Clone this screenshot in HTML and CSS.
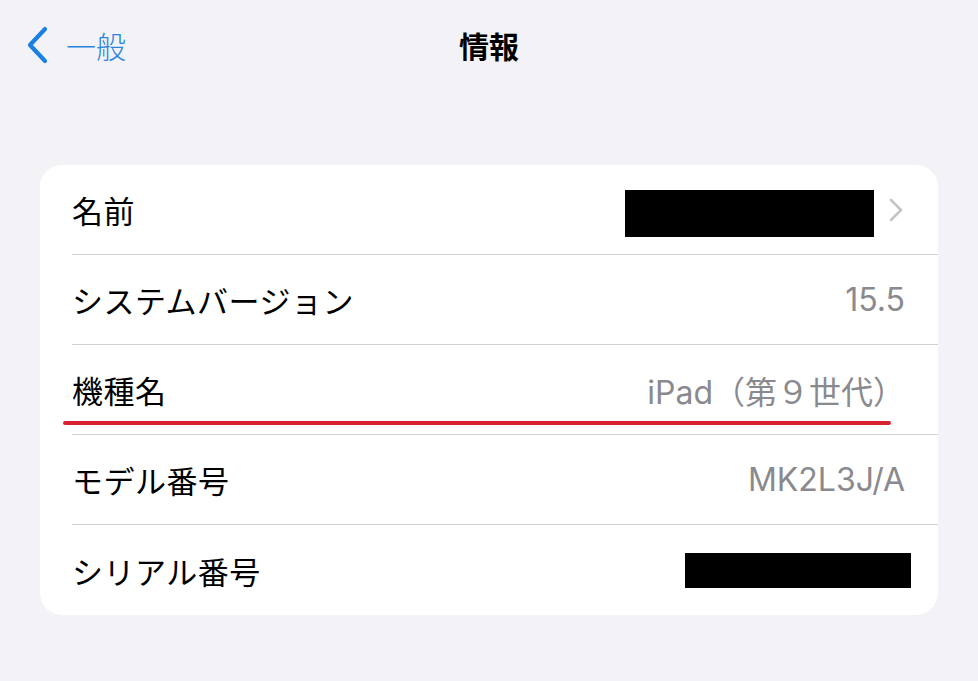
FILE: index.html
```html
<!DOCTYPE html>
<html lang="ja">
<head>
    <meta charset="UTF-8">
    <meta name="viewport" content="width=device-width, initial-scale=1.0">
    <title>情報</title>
    <link rel="stylesheet" href="styles.css">
</head>
<body>

    <div class="navbar">
        <a class="back" href="#">
            <svg class="back-icon" width="24" height="38" viewBox="0 0 24 38">
                <path d="M20 3 L5 19 L20 35" fill="none" stroke="#1b80e4" stroke-width="4.2" stroke-linecap="round" stroke-linejoin="round"/>
            </svg>
            <span>一般</span>
        </a>
        <h1 class="title">情報</h1>
        <div></div>
    </div>

    <div class="card">
        <div class="row">
            <span class="label">名前</span>
            <span class="value">
                <span class="redact redact-name"></span>
                <svg class="chevron" width="14" height="24" viewBox="0 0 14 24">
                    <path d="M2 2 L12 12 L2 22" fill="none" stroke="#c4c4c7" stroke-width="2.6" stroke-linecap="round" stroke-linejoin="round"/>
                </svg>
            </span>
        </div>
        <div class="row">
            <span class="label">システムバージョン</span>
            <span class="value">15.5</span>
        </div>
        <div class="row">
            <span class="label">機種名</span>
            <span class="value">iPad（第９世代）</span>
        </div>
        <div class="row">
            <span class="label">モデル番号</span>
            <span class="value">MK2L3J/A</span>
        </div>
        <div class="row row-last">
            <span class="label">シリアル番号</span>
            <span class="value"><span class="redact redact-serial"></span></span>
        </div>

        <!-- red marker under the model name row -->
        <div class="marker"></div>
    </div>

</body>
</html>
```

FILE: styles.css
```css
body {
    font-family: Inter, "Noto Sans CJK JP", sans-serif;
    margin: 0;
    background-color: #f2f2f7;
    color: #000;
}

.navbar {
    display: grid;
    grid-template-columns: 1fr auto 1fr;
    align-items: center;
    height: 90px;
}

.back {
    display: flex;
    align-items: center;
    gap: 17px;
    padding-left: 25px;
    color: #2b84de;
    text-decoration: none;
    font-size: 30px;
    font-family: "Noto Sans CJK JP", sans-serif;
    font-weight: 300;
}

.back-icon {
    display: block;
}

.title {
    margin: 0;
    font-size: 30px;
    font-weight: 700;
    font-family: "Noto Sans CJK JP", sans-serif;
}

.card {
    position: relative;
    margin: 75px 40px 0 40px;
    background-color: #fff;
    border-radius: 22px;
    overflow: hidden;
}

.row {
    display: flex;
    align-items: center;
    justify-content: space-between;
    height: 89px;
    margin-left: 32px;
    padding-right: 33px;
    border-bottom: 1px solid #d1d1d6;
}

.row-last {
    border-bottom: none;
    height: 90px;
}

.label {
    font-size: 31px;
    letter-spacing: 0.5px;
    font-family: "Noto Sans CJK JP", sans-serif;
    font-weight: 400;
}

.value {
    display: flex;
    align-items: center;
    color: #8a8a8e;
    font-size: 32px;
}

.redact {
    display: block;
    background-color: #000;
}

.redact-name {
    width: 249px;
    height: 47px;
    margin-top: 8px;
    margin-right: 15px;
}

.redact-serial {
    width: 226px;
    height: 35px;
    margin-right: -6px;
}

.chevron {
    display: block;
    margin-right: 2px;
}

.marker {
    position: absolute;
    left: 23px;
    top: 256px;
    width: 828px;
    height: 4px;
    border-radius: 2px;
    background-color: #d7232e;
}
```
